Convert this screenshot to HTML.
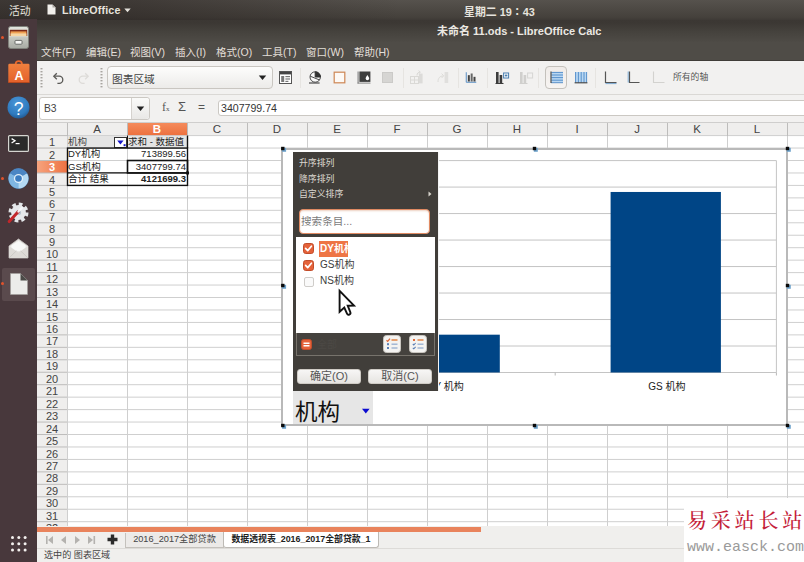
<!DOCTYPE html><html lang="zh-CN"><head><meta charset="utf-8"><title>LibreOffice Calc</title><style>
*{margin:0;padding:0;box-sizing:border-box}
html,body{width:804px;height:562px;overflow:hidden;background:#fff}
body{position:relative;font-family:"Liberation Sans","Noto Sans CJK SC",sans-serif;font-size:11px;color:#333}
.a{position:absolute}
.t{position:absolute;white-space:nowrap;line-height:1}
#topbar{left:0;top:0;width:804px;height:20px;background:linear-gradient(#56524d,#45413c 85%,#3e3a36)}
#dock{left:0;top:19px;width:37px;height:543px;background:#48383c}
#title{left:37px;top:19px;width:767px;height:23px;background:linear-gradient(#3b3733 0,#3c3834 18%,#45423d 55%,#4e4b46 100%)}
#menu{left:37px;top:42px;width:767px;height:19px;background:#4f4c47;border-bottom:1px solid #403d39}
#tool{left:37px;top:61px;width:767px;height:34px;background:#f2f1f0;border-bottom:1px solid #dad8d5}
#fbar{left:37px;top:95px;width:767px;height:27px;background:#f2f1f0}
.sep{position:absolute;top:68px;width:1px;height:20px;background:#e6e4e1}
.ui{font-family:"Liberation Sans","Noto Sans CJK SC",sans-serif}
.cell{position:absolute;white-space:nowrap;line-height:12.4px;height:12.4px;font-size:9.5px;color:#222}
.rn{position:absolute;left:37px;width:30px;text-align:center;font-size:11px;line-height:12.4px;height:12.4px;color:#333}
.ch{position:absolute;top:122px;width:60px;height:14px;line-height:14px;text-align:center;font-size:11.5px;color:#333}
</style></head><body>
<div class="a" id="sheet" style="left:37px;top:122px;width:767px;height:404px;background:#fff"></div>
<div class="a" style="left:37px;top:122px;width:767px;height:14px;background:#efeeed"></div>
<div class="a" style="left:37px;top:122px;width:30px;height:404px;background:#efeeed"></div>
<div class="a" style="left:127px;top:122px;width:60px;height:14px;background:linear-gradient(#f58d5e,#ec6f3d)"></div>
<div class="a" style="left:37px;top:160.51px;width:30px;height:12.46px;background:linear-gradient(90deg,#f6a37e,#ee7242)"></div>
<svg class="a" style="left:0;top:0" width="804" height="562" viewBox="0 0 804 562"><line x1="67" y1="135.60" x2="804" y2="135.60" stroke="#cfcfcf" stroke-width="1"/><line x1="37" y1="135.60" x2="67" y2="135.60" stroke="#bdbcbb" stroke-width="1"/><line x1="67" y1="148.06" x2="804" y2="148.06" stroke="#cfcfcf" stroke-width="1"/><line x1="37" y1="148.06" x2="67" y2="148.06" stroke="#bdbcbb" stroke-width="1"/><line x1="67" y1="160.51" x2="804" y2="160.51" stroke="#cfcfcf" stroke-width="1"/><line x1="37" y1="160.51" x2="67" y2="160.51" stroke="#bdbcbb" stroke-width="1"/><line x1="67" y1="172.97" x2="804" y2="172.97" stroke="#cfcfcf" stroke-width="1"/><line x1="37" y1="172.97" x2="67" y2="172.97" stroke="#bdbcbb" stroke-width="1"/><line x1="67" y1="185.42" x2="804" y2="185.42" stroke="#cfcfcf" stroke-width="1"/><line x1="37" y1="185.42" x2="67" y2="185.42" stroke="#bdbcbb" stroke-width="1"/><line x1="67" y1="197.88" x2="804" y2="197.88" stroke="#cfcfcf" stroke-width="1"/><line x1="37" y1="197.88" x2="67" y2="197.88" stroke="#bdbcbb" stroke-width="1"/><line x1="67" y1="210.33" x2="804" y2="210.33" stroke="#cfcfcf" stroke-width="1"/><line x1="37" y1="210.33" x2="67" y2="210.33" stroke="#bdbcbb" stroke-width="1"/><line x1="67" y1="222.79" x2="804" y2="222.79" stroke="#cfcfcf" stroke-width="1"/><line x1="37" y1="222.79" x2="67" y2="222.79" stroke="#bdbcbb" stroke-width="1"/><line x1="67" y1="235.24" x2="804" y2="235.24" stroke="#cfcfcf" stroke-width="1"/><line x1="37" y1="235.24" x2="67" y2="235.24" stroke="#bdbcbb" stroke-width="1"/><line x1="67" y1="247.70" x2="804" y2="247.70" stroke="#cfcfcf" stroke-width="1"/><line x1="37" y1="247.70" x2="67" y2="247.70" stroke="#bdbcbb" stroke-width="1"/><line x1="67" y1="260.15" x2="804" y2="260.15" stroke="#cfcfcf" stroke-width="1"/><line x1="37" y1="260.15" x2="67" y2="260.15" stroke="#bdbcbb" stroke-width="1"/><line x1="67" y1="272.61" x2="804" y2="272.61" stroke="#cfcfcf" stroke-width="1"/><line x1="37" y1="272.61" x2="67" y2="272.61" stroke="#bdbcbb" stroke-width="1"/><line x1="67" y1="285.06" x2="804" y2="285.06" stroke="#cfcfcf" stroke-width="1"/><line x1="37" y1="285.06" x2="67" y2="285.06" stroke="#bdbcbb" stroke-width="1"/><line x1="67" y1="297.52" x2="804" y2="297.52" stroke="#cfcfcf" stroke-width="1"/><line x1="37" y1="297.52" x2="67" y2="297.52" stroke="#bdbcbb" stroke-width="1"/><line x1="67" y1="309.97" x2="804" y2="309.97" stroke="#cfcfcf" stroke-width="1"/><line x1="37" y1="309.97" x2="67" y2="309.97" stroke="#bdbcbb" stroke-width="1"/><line x1="67" y1="322.43" x2="804" y2="322.43" stroke="#cfcfcf" stroke-width="1"/><line x1="37" y1="322.43" x2="67" y2="322.43" stroke="#bdbcbb" stroke-width="1"/><line x1="67" y1="334.88" x2="804" y2="334.88" stroke="#cfcfcf" stroke-width="1"/><line x1="37" y1="334.88" x2="67" y2="334.88" stroke="#bdbcbb" stroke-width="1"/><line x1="67" y1="347.33" x2="804" y2="347.33" stroke="#cfcfcf" stroke-width="1"/><line x1="37" y1="347.33" x2="67" y2="347.33" stroke="#bdbcbb" stroke-width="1"/><line x1="67" y1="359.79" x2="804" y2="359.79" stroke="#cfcfcf" stroke-width="1"/><line x1="37" y1="359.79" x2="67" y2="359.79" stroke="#bdbcbb" stroke-width="1"/><line x1="67" y1="372.24" x2="804" y2="372.24" stroke="#cfcfcf" stroke-width="1"/><line x1="37" y1="372.24" x2="67" y2="372.24" stroke="#bdbcbb" stroke-width="1"/><line x1="67" y1="384.70" x2="804" y2="384.70" stroke="#cfcfcf" stroke-width="1"/><line x1="37" y1="384.70" x2="67" y2="384.70" stroke="#bdbcbb" stroke-width="1"/><line x1="67" y1="397.15" x2="804" y2="397.15" stroke="#cfcfcf" stroke-width="1"/><line x1="37" y1="397.15" x2="67" y2="397.15" stroke="#bdbcbb" stroke-width="1"/><line x1="67" y1="409.61" x2="804" y2="409.61" stroke="#cfcfcf" stroke-width="1"/><line x1="37" y1="409.61" x2="67" y2="409.61" stroke="#bdbcbb" stroke-width="1"/><line x1="67" y1="422.06" x2="804" y2="422.06" stroke="#cfcfcf" stroke-width="1"/><line x1="37" y1="422.06" x2="67" y2="422.06" stroke="#bdbcbb" stroke-width="1"/><line x1="67" y1="434.52" x2="804" y2="434.52" stroke="#cfcfcf" stroke-width="1"/><line x1="37" y1="434.52" x2="67" y2="434.52" stroke="#bdbcbb" stroke-width="1"/><line x1="67" y1="446.97" x2="804" y2="446.97" stroke="#cfcfcf" stroke-width="1"/><line x1="37" y1="446.97" x2="67" y2="446.97" stroke="#bdbcbb" stroke-width="1"/><line x1="67" y1="459.43" x2="804" y2="459.43" stroke="#cfcfcf" stroke-width="1"/><line x1="37" y1="459.43" x2="67" y2="459.43" stroke="#bdbcbb" stroke-width="1"/><line x1="67" y1="471.88" x2="804" y2="471.88" stroke="#cfcfcf" stroke-width="1"/><line x1="37" y1="471.88" x2="67" y2="471.88" stroke="#bdbcbb" stroke-width="1"/><line x1="67" y1="484.34" x2="804" y2="484.34" stroke="#cfcfcf" stroke-width="1"/><line x1="37" y1="484.34" x2="67" y2="484.34" stroke="#bdbcbb" stroke-width="1"/><line x1="67" y1="496.79" x2="804" y2="496.79" stroke="#cfcfcf" stroke-width="1"/><line x1="37" y1="496.79" x2="67" y2="496.79" stroke="#bdbcbb" stroke-width="1"/><line x1="67" y1="509.25" x2="804" y2="509.25" stroke="#cfcfcf" stroke-width="1"/><line x1="37" y1="509.25" x2="67" y2="509.25" stroke="#bdbcbb" stroke-width="1"/><line x1="67" y1="521.70" x2="804" y2="521.70" stroke="#cfcfcf" stroke-width="1"/><line x1="37" y1="521.70" x2="67" y2="521.70" stroke="#bdbcbb" stroke-width="1"/><line x1="67.5" y1="136" x2="67.5" y2="526" stroke="#cfcfcf" stroke-width="1"/><line x1="67.5" y1="122" x2="67.5" y2="136" stroke="#bdbcbb" stroke-width="1"/><line x1="127.5" y1="136" x2="127.5" y2="526" stroke="#cfcfcf" stroke-width="1"/><line x1="127.5" y1="122" x2="127.5" y2="136" stroke="#bdbcbb" stroke-width="1"/><line x1="187.5" y1="136" x2="187.5" y2="526" stroke="#cfcfcf" stroke-width="1"/><line x1="187.5" y1="122" x2="187.5" y2="136" stroke="#bdbcbb" stroke-width="1"/><line x1="247.5" y1="136" x2="247.5" y2="526" stroke="#cfcfcf" stroke-width="1"/><line x1="247.5" y1="122" x2="247.5" y2="136" stroke="#bdbcbb" stroke-width="1"/><line x1="307.5" y1="136" x2="307.5" y2="526" stroke="#cfcfcf" stroke-width="1"/><line x1="307.5" y1="122" x2="307.5" y2="136" stroke="#bdbcbb" stroke-width="1"/><line x1="367.5" y1="136" x2="367.5" y2="526" stroke="#cfcfcf" stroke-width="1"/><line x1="367.5" y1="122" x2="367.5" y2="136" stroke="#bdbcbb" stroke-width="1"/><line x1="427.5" y1="136" x2="427.5" y2="526" stroke="#cfcfcf" stroke-width="1"/><line x1="427.5" y1="122" x2="427.5" y2="136" stroke="#bdbcbb" stroke-width="1"/><line x1="487.5" y1="136" x2="487.5" y2="526" stroke="#cfcfcf" stroke-width="1"/><line x1="487.5" y1="122" x2="487.5" y2="136" stroke="#bdbcbb" stroke-width="1"/><line x1="547.5" y1="136" x2="547.5" y2="526" stroke="#cfcfcf" stroke-width="1"/><line x1="547.5" y1="122" x2="547.5" y2="136" stroke="#bdbcbb" stroke-width="1"/><line x1="607.5" y1="136" x2="607.5" y2="526" stroke="#cfcfcf" stroke-width="1"/><line x1="607.5" y1="122" x2="607.5" y2="136" stroke="#bdbcbb" stroke-width="1"/><line x1="667.5" y1="136" x2="667.5" y2="526" stroke="#cfcfcf" stroke-width="1"/><line x1="667.5" y1="122" x2="667.5" y2="136" stroke="#bdbcbb" stroke-width="1"/><line x1="727.5" y1="136" x2="727.5" y2="526" stroke="#cfcfcf" stroke-width="1"/><line x1="727.5" y1="122" x2="727.5" y2="136" stroke="#bdbcbb" stroke-width="1"/><line x1="787.5" y1="136" x2="787.5" y2="526" stroke="#cfcfcf" stroke-width="1"/><line x1="787.5" y1="122" x2="787.5" y2="136" stroke="#bdbcbb" stroke-width="1"/><line x1="37" y1="122.5" x2="804" y2="122.5" stroke="#cfcecd" stroke-width="1"/></svg>
<div class="ch" style="left:67px;color:#444;font-weight:normal">A</div>
<div class="ch" style="left:127px;color:#fff;font-weight:bold">B</div>
<div class="ch" style="left:187px;color:#444;font-weight:normal">C</div>
<div class="ch" style="left:247px;color:#444;font-weight:normal">D</div>
<div class="ch" style="left:307px;color:#444;font-weight:normal">E</div>
<div class="ch" style="left:367px;color:#444;font-weight:normal">F</div>
<div class="ch" style="left:427px;color:#444;font-weight:normal">G</div>
<div class="ch" style="left:487px;color:#444;font-weight:normal">H</div>
<div class="ch" style="left:547px;color:#444;font-weight:normal">I</div>
<div class="ch" style="left:607px;color:#444;font-weight:normal">J</div>
<div class="ch" style="left:667px;color:#444;font-weight:normal">K</div>
<div class="ch" style="left:727px;color:#444;font-weight:normal">L</div>
<div class="ch" style="left:787px;color:#444;font-weight:normal">M</div>
<div class="rn" style="top:136.20px;color:#444;font-weight:normal">1</div>
<div class="rn" style="top:148.66px;color:#444;font-weight:normal">2</div>
<div class="rn" style="top:161.11px;color:#fff;font-weight:bold">3</div>
<div class="rn" style="top:173.56px;color:#444;font-weight:normal">4</div>
<div class="rn" style="top:186.02px;color:#444;font-weight:normal">5</div>
<div class="rn" style="top:198.47px;color:#444;font-weight:normal">6</div>
<div class="rn" style="top:210.93px;color:#444;font-weight:normal">7</div>
<div class="rn" style="top:223.38px;color:#444;font-weight:normal">8</div>
<div class="rn" style="top:235.84px;color:#444;font-weight:normal">9</div>
<div class="rn" style="top:248.29px;color:#444;font-weight:normal">10</div>
<div class="rn" style="top:260.75px;color:#444;font-weight:normal">11</div>
<div class="rn" style="top:273.21px;color:#444;font-weight:normal">12</div>
<div class="rn" style="top:285.66px;color:#444;font-weight:normal">13</div>
<div class="rn" style="top:298.12px;color:#444;font-weight:normal">14</div>
<div class="rn" style="top:310.57px;color:#444;font-weight:normal">15</div>
<div class="rn" style="top:323.02px;color:#444;font-weight:normal">16</div>
<div class="rn" style="top:335.48px;color:#444;font-weight:normal">17</div>
<div class="rn" style="top:347.94px;color:#444;font-weight:normal">18</div>
<div class="rn" style="top:360.39px;color:#444;font-weight:normal">19</div>
<div class="rn" style="top:372.85px;color:#444;font-weight:normal">20</div>
<div class="rn" style="top:385.30px;color:#444;font-weight:normal">21</div>
<div class="rn" style="top:397.75px;color:#444;font-weight:normal">22</div>
<div class="rn" style="top:410.21px;color:#444;font-weight:normal">23</div>
<div class="rn" style="top:422.66px;color:#444;font-weight:normal">24</div>
<div class="rn" style="top:435.12px;color:#444;font-weight:normal">25</div>
<div class="rn" style="top:447.58px;color:#444;font-weight:normal">26</div>
<div class="rn" style="top:460.03px;color:#444;font-weight:normal">27</div>
<div class="rn" style="top:472.49px;color:#444;font-weight:normal">28</div>
<div class="rn" style="top:484.94px;color:#444;font-weight:normal">29</div>
<div class="rn" style="top:497.39px;color:#444;font-weight:normal">30</div>
<div class="rn" style="top:509.85px;color:#444;font-weight:normal">31</div>
<div class="rn" style="top:522.00px;height:4.79px;overflow:hidden">32</div>
<div class="a" style="left:68px;top:136.10px;width:59px;height:11.96px;background:#e4e4e4"></div>
<div class="a" style="left:128px;top:136.10px;width:59px;height:11.96px;background:#e4e4e4"></div>
<div class="cell" style="left:68px;top:136.00px;width:58px;text-align:left;color:#444;">机构</div>
<div class="cell" style="left:128px;top:136.00px;width:58px;text-align:left;color:#222;">求和 - 数据值</div>
<div class="cell" style="left:68px;top:148.46px;width:58px;text-align:left;">DY机构</div>
<div class="cell" style="left:128px;top:148.46px;width:58px;text-align:right;">713899.56</div>
<div class="cell" style="left:68px;top:160.91px;width:58px;text-align:left;">GS机构</div>
<div class="cell" style="left:128px;top:160.91px;width:58px;text-align:right;">3407799.74</div>
<div class="cell" style="left:68px;top:173.37px;width:58px;text-align:left;">合计 结果</div>
<div class="cell" style="left:128px;top:173.37px;width:58px;text-align:right;font-weight:bold;">4121699.3</div>
<div class="a" style="left:114px;top:136.60px;width:13px;height:10.96px;background:#fff;border:1px solid #333"></div>
<svg class="a" style="left:114.5px;top:136.60px" width="12" height="11" viewBox="0 0 12 11"><path d="M2.2 3.6h6.4L5.4 7.4z" fill="#1414c8"/><rect x="8.6" y="7.2" width="2" height="2" fill="#1414c8"/></svg>
<svg class="a" style="left:0;top:0" width="804" height="562" viewBox="0 0 804 562" fill="none" stroke="#111"><rect x="67.5" y="148.06" width="120" height="37.36" stroke-width="1.4"/><line x1="67" y1="172.97" x2="188" y2="172.97" stroke-width="1.3"/><line x1="127.5" y1="135.60" x2="127.5" y2="148.06" stroke-width="1"/><line x1="187.5" y1="135.60" x2="187.5" y2="148.06" stroke-width="1.4"/><rect x="127.5" y="160.51" width="60" height="12.46" stroke-width="1.6"/><rect x="186" y="171.47" width="3" height="3" fill="#111" stroke="none"/></svg>
<div class="a" style="left:281px;top:148px;width:507px;height:278px;background:#fff;border:2px solid #b9b9b9"></div>
<svg class="a" style="left:0;top:0" width="804" height="562" viewBox="0 0 804 562"><line x1="331.0" y1="160.60" x2="776.4" y2="160.60" stroke="#c4c4c4" stroke-width="1"/><line x1="331.0" y1="187.09" x2="776.4" y2="187.09" stroke="#c4c4c4" stroke-width="1"/><line x1="331.0" y1="213.57" x2="776.4" y2="213.57" stroke="#c4c4c4" stroke-width="1"/><line x1="331.0" y1="240.06" x2="776.4" y2="240.06" stroke="#c4c4c4" stroke-width="1"/><line x1="331.0" y1="266.55" x2="776.4" y2="266.55" stroke="#c4c4c4" stroke-width="1"/><line x1="331.0" y1="293.04" x2="776.4" y2="293.04" stroke="#c4c4c4" stroke-width="1"/><line x1="331.0" y1="319.52" x2="776.4" y2="319.52" stroke="#c4c4c4" stroke-width="1"/><line x1="331.0" y1="346.01" x2="776.4" y2="346.01" stroke="#c4c4c4" stroke-width="1"/><line x1="331.0" y1="372.50" x2="776.4" y2="372.50" stroke="#c4c4c4" stroke-width="1"/><line x1="776.4" y1="160.60" x2="776.4" y2="372.50" stroke="#c4c4c4" stroke-width="1"/><line x1="334.0" y1="160.60" x2="334.0" y2="375.50" stroke="#c4c4c4" stroke-width="1"/><line x1="334.0" y1="372.50" x2="334.0" y2="375.50" stroke="#b8b8b8" stroke-width="1"/><line x1="555.2" y1="372.50" x2="555.2" y2="375.50" stroke="#b8b8b8" stroke-width="1"/><line x1="776.4" y1="372.50" x2="776.4" y2="375.50" stroke="#b8b8b8" stroke-width="1"/><rect x="389.5" y="334.68" width="110.3" height="37.82" fill="#004586"/><rect x="610.6" y="191.97" width="110.3" height="180.53" fill="#004586"/><text x="445.6" y="390" font-size="10" fill="#222" text-anchor="middle" font-family="Liberation Sans, Noto Sans CJK SC, sans-serif">DY 机构</text><text x="666.8" y="390" font-size="10" fill="#222" text-anchor="middle" font-family="Liberation Sans, Noto Sans CJK SC, sans-serif">GS 机构</text><rect x="282.1" y="147.8" width="4" height="4" fill="#6fa3cc"/><rect x="281.1" y="146.8" width="3.4" height="3.4" fill="#0a0a0a"/><rect x="533.8" y="147.8" width="4" height="4" fill="#6fa3cc"/><rect x="532.8" y="146.8" width="3.4" height="3.4" fill="#0a0a0a"/><rect x="786.8" y="147.8" width="4" height="4" fill="#6fa3cc"/><rect x="785.8" y="146.8" width="3.4" height="3.4" fill="#0a0a0a"/><rect x="282.1" y="284.8" width="4" height="4" fill="#6fa3cc"/><rect x="281.1" y="283.8" width="3.4" height="3.4" fill="#0a0a0a"/><rect x="786.8" y="284.8" width="4" height="4" fill="#6fa3cc"/><rect x="785.8" y="283.8" width="3.4" height="3.4" fill="#0a0a0a"/><rect x="282.1" y="424.8" width="4" height="4" fill="#6fa3cc"/><rect x="281.1" y="423.8" width="3.4" height="3.4" fill="#0a0a0a"/><rect x="533.8" y="424.8" width="4" height="4" fill="#6fa3cc"/><rect x="532.8" y="423.8" width="3.4" height="3.4" fill="#0a0a0a"/><rect x="786.8" y="424.8" width="4" height="4" fill="#6fa3cc"/><rect x="785.8" y="423.8" width="3.4" height="3.4" fill="#0a0a0a"/></svg>
<div class="a" style="left:293px;top:391px;width:80px;height:33px;background:#e6e6e6"></div>
<div class="t" style="left:295px;top:401.5px;font-size:22.5px;color:#111;font-family:'Liberation Sans','Noto Sans CJK SC',sans-serif">机构</div>
<svg class="a" style="left:361px;top:408px" width="10" height="7" viewBox="0 0 10 7"><path d="M1 0.8h7.6L4.8 5.6z" fill="#0b0bd0"/></svg>
<div class="a" style="left:293px;top:152px;width:145px;height:239px;background:#413e3a"></div>
<div class="t" style="left:299px;top:159.2px;font-size:8.9px;color:#dcd8d0">升序排列</div>
<div class="t" style="left:299px;top:174.5px;font-size:8.9px;color:#dcd8d0">降序排列</div>
<div class="t" style="left:299px;top:189.8px;font-size:8.9px;color:#dcd8d0">自定义排序</div>
<svg class="a" style="left:428px;top:191px" width="4" height="6" viewBox="0 0 4 6"><path d="M0.5 0.5L3.5 3L0.5 5.5z" fill="#d8d4cc"/></svg>
<div class="a" style="left:438px;top:152px;width:1px;height:239px;background:#f4f4f4"></div>
<div class="a" style="left:299px;top:209px;width:131px;height:25px;background:#fff;border:1px solid #e08a62;border-radius:4px;box-shadow:inset 0 1px 2px rgba(200,120,80,.35)"></div>
<div class="t" style="left:301px;top:216.2px;font-size:10.6px;color:#7b7b7b">搜索条目...</div>
<div class="a" style="left:296px;top:237px;width:139px;height:96px;background:#fff"></div>
<div class="a" style="left:319px;top:241px;width:29px;height:16px;background:#ee7545;overflow:hidden"><div class="t" style="left:1px;top:3px;font-size:10px;color:#fff;font-weight:bold">DY机构</div></div>
<div class="t" style="left:320px;top:260px;font-size:10px;color:#3c3c3c">GS机构</div>
<div class="t" style="left:320px;top:276px;font-size:10px;color:#3c3c3c">NS机构</div>
<svg class="a" style="left:303px;top:243px" width="11" height="11" viewBox="0 0 11 11"><rect x="0.5" y="0.5" width="10" height="10" rx="2.2" fill="#e4623a" stroke="#c24d2b"/><path d="M2.6 5.4L4.7 7.6L8.4 3.2" stroke="#fff" stroke-width="1.7" fill="none" stroke-linecap="round" stroke-linejoin="round"/></svg>
<svg class="a" style="left:303px;top:260px" width="11" height="11" viewBox="0 0 11 11"><rect x="0.5" y="0.5" width="10" height="10" rx="2.2" fill="#e4623a" stroke="#c24d2b"/><path d="M2.6 5.4L4.7 7.6L8.4 3.2" stroke="#fff" stroke-width="1.7" fill="none" stroke-linecap="round" stroke-linejoin="round"/></svg>
<div class="a" style="left:304px;top:277px;width:10px;height:10px;border:1px solid #cfcdca;border-radius:2px;background:#fafafa"></div>
<div class="a" style="left:296px;top:333px;width:139px;height:23px;border:1px solid #77736c;border-top:none;background:#45423e"></div>
<svg class="a" style="left:301px;top:339px" width="11" height="11" viewBox="0 0 11 11"><rect x="0.5" y="0.5" width="10" height="10" rx="2.2" fill="#e4623a" stroke="#c24d2b"/><path d="M2.5 4.2h6M2.5 6.8h6" stroke="#fff" stroke-width="1.5"/></svg>
<div class="t" style="left:317px;top:340px;font-size:10px;color:#4c4945">全部</div>
<svg class="a" style="left:383px;top:335px" width="18" height="18" viewBox="0 0 18 18"><rect x="0.5" y="0.5" width="17" height="17" rx="3" fill="#f4f3f1" stroke="#c9c5bf"/><path d="M3.5 5.2l1.2 1.2L7 3.6" stroke="#e06a3a" stroke-width="1.3" fill="none"/><rect x="8.5" y="4" width="6" height="2" fill="#e6a070"/><rect x="4" y="8.2" width="2" height="2" fill="#5b7fb5"/><rect x="8.5" y="8.5" width="6" height="1.4" fill="#9db3d2"/><rect x="4" y="12" width="2" height="2" fill="#5b7fb5"/><rect x="8.5" y="12.3" width="6" height="1.4" fill="#9db3d2"/></svg>
<svg class="a" style="left:409px;top:335px" width="18" height="18" viewBox="0 0 18 18"><rect x="0.5" y="0.5" width="17" height="17" rx="3" fill="#f4f3f1" stroke="#c9c5bf"/><rect x="4" y="4" width="2" height="2" fill="#e06a3a"/><rect x="8.5" y="4" width="6" height="2" fill="#e6a070"/><path d="M3.8 9l1 1L6.6 8" stroke="#5b7fb5" stroke-width="1.1" fill="none"/><rect x="8.5" y="8.5" width="6" height="1.4" fill="#9db3d2"/><path d="M3.8 12.8l1 1L6.6 11.8" stroke="#5b7fb5" stroke-width="1.1" fill="none"/><rect x="8.5" y="12.3" width="6" height="1.4" fill="#9db3d2"/></svg>
<div class="a" style="left:297px;top:369px;width:64px;height:15px;background:linear-gradient(#f7f6f5,#e6e4e1);border-radius:3px;border:1px solid #cfcbc5;text-align:center;font-size:11px;line-height:13px;color:#555">确定(O)</div>
<div class="a" style="left:368px;top:369px;width:64px;height:15px;background:linear-gradient(#f7f6f5,#e6e4e1);border-radius:3px;border:1px solid #cfcbc5;text-align:center;font-size:11px;line-height:13px;color:#555">取消(C)</div>
<svg class="a" style="left:335px;top:286px" width="24" height="32" viewBox="0 0 24 32"><path d="M4.6 4.8V25.8L9.3 21.5L12 27.6A1.75 1.75 0 0 0 15.3 26.2L12.7 19.7L19 19.5z" fill="#fff" stroke="#111" stroke-width="1.9" stroke-linejoin="miter"/></svg>
<div class="a" style="left:37px;top:526px;width:767px;height:36px;background:#f0efed"></div>
<div class="a" style="left:37px;top:527px;width:444px;height:5px;background:#e9835c"></div>
<div class="a" style="left:37px;top:548px;width:767px;height:1px;background:#dddbd8"></div>
<svg class="a" style="left:44px;top:534px" width="60" height="12" viewBox="0 0 60 12" fill="#b4b2af"><rect x="2" y="2" width="1.6" height="8"/><path d="M9 2v8L4 6z"/><path d="M22 2v8L17 6z"/><path d="M31 2v8L36 6z"/><path d="M44 2v8L49 6z"/><rect x="49.5" y="2" width="1.6" height="8"/></svg>
<svg class="a" style="left:107px;top:534px" width="11" height="11" viewBox="0 0 11 11"><path d="M3.8 0.5h3.4v3.3h3.3v3.4H7.2v3.3H3.8V7.2H0.5V3.8h3.3z" fill="#2a2a2a"/></svg>
<div class="a" style="left:125px;top:533px;width:99px;height:15px;background:#eceae8;border:1px solid #c4c1bc;border-top:none;text-align:center;font-size:9.2px;line-height:13px;color:#444">2016_2017全部贷款</div>
<div class="a" style="left:223px;top:532px;width:156px;height:16px;background:#fff;border:1px solid #bdbab5;border-top:none;border-radius:0 0 3px 3px;text-align:center;font-size:8.9px;line-height:14px;color:#222;font-weight:bold">数据透视表_2016_2017全部贷款_1</div>
<div class="t" style="left:44px;top:551px;font-size:9.1px;color:#444">选中的 图表区域</div>
<div class="a" style="left:684px;top:498px;width:120px;height:64px;background:#fff"></div>
<div class="t" style="left:687px;top:511px;font-size:20px;letter-spacing:3.8px;color:#c41e3a;font-family:'Liberation Serif','Noto Serif CJK SC',serif;font-weight:500">易采站长站</div>
<div class="t" style="left:687px;top:540px;font-size:15px;color:#9a9a9a;font-family:'Liberation Mono',monospace">www.easck.com</div>
<div class="a" id="title"></div>
<div class="a" id="menu"></div>
<div class="a" id="tool"></div>
<div class="a" id="fbar"></div>
<div class="a" id="topbar"></div>
<div class="a" style="left:0;top:0;width:420px;height:20px;background:linear-gradient(90deg,rgba(40,34,32,.55) 0,rgba(40,34,32,.5) 130px,rgba(40,34,32,0) 400px)"></div>
<div class="a" id="dock"></div>
<div class="t" style="left:9px;top:5.8px;font-size:10.8px;color:#e6e3dd">活动</div>
<svg class="a" style="left:47px;top:4px" width="9" height="11" viewBox="0 0 9 11"><path d="M0.5 0.5h5L8.5 3.6V10.5h-8z" fill="#f2f0ec"/><path d="M5.5 0.5v3.1h3z" fill="#a9a6a0"/></svg>
<div class="t" style="left:62px;top:5.3px;font-size:10.7px;color:#e6e3dd;font-weight:bold;letter-spacing:.2px">LibreOffice</div>
<svg class="a" style="left:124px;top:8px" width="7" height="5" viewBox="0 0 7 5"><path d="M0.3 0.5h6.4L3.5 4.2z" fill="#e6e3dd"/></svg>
<div class="t" style="left:464px;top:5.8px;font-size:10.9px;color:#e6e3dd;font-weight:bold">星期二 19<span lang="ja" style="font-family:'Noto Sans CJK JP',sans-serif">：</span>43</div>
<div class="t" style="left:437px;top:25.5px;font-size:11px;color:#ebe8e2;font-weight:bold">未命名 11.ods - LibreOffice Calc</div>
<div class="t" style="left:41px;top:47px;font-size:10.5px;color:#e3dfd8">文件(F)</div>
<div class="t" style="left:86px;top:47px;font-size:10.5px;color:#e3dfd8">编辑(E)</div>
<div class="t" style="left:130px;top:47px;font-size:10.5px;color:#e3dfd8">视图(V)</div>
<div class="t" style="left:175px;top:47px;font-size:10.5px;color:#e3dfd8">插入(I)</div>
<div class="t" style="left:216px;top:47px;font-size:10.5px;color:#e3dfd8">格式(O)</div>
<div class="t" style="left:262px;top:47px;font-size:10.5px;color:#e3dfd8">工具(T)</div>
<div class="t" style="left:306px;top:47px;font-size:10.5px;color:#e3dfd8">窗口(W)</div>
<div class="t" style="left:354px;top:47px;font-size:10.5px;color:#e3dfd8">帮助(H)</div>
<svg class="a" style="left:40px;top:67px" width="3" height="22" viewBox="0 0 3 22" fill="#a8a5a0"><rect x="0.5" y="1" width="2" height="1.4"/><rect x="0.5" y="4" width="2" height="1.4"/><rect x="0.5" y="7" width="2" height="1.4"/><rect x="0.5" y="10" width="2" height="1.4"/><rect x="0.5" y="13" width="2" height="1.4"/><rect x="0.5" y="16" width="2" height="1.4"/><rect x="0.5" y="19" width="2" height="1.4"/></svg>
<svg class="a" style="left:100px;top:67px" width="3" height="22" viewBox="0 0 3 22" fill="#a8a5a0"><rect x="0.5" y="1" width="2" height="1.4"/><rect x="0.5" y="4" width="2" height="1.4"/><rect x="0.5" y="7" width="2" height="1.4"/><rect x="0.5" y="10" width="2" height="1.4"/><rect x="0.5" y="13" width="2" height="1.4"/><rect x="0.5" y="16" width="2" height="1.4"/><rect x="0.5" y="19" width="2" height="1.4"/></svg>
<svg class="a" style="left:52px;top:71px" width="14" height="15" viewBox="0 0 14 15" fill="none" stroke="#5a5956" stroke-width="1.3"><path d="M2.2 5.2H7.2A3.6 3.6 0 0 1 7.2 12.4H5.4"/><path d="M4.8 2.2L1.8 5.2L4.8 8.2"/></svg>
<svg class="a" style="left:76px;top:71px" width="14" height="15" viewBox="0 0 14 15" fill="none" stroke="#dddbd8" stroke-width="1.3"><path d="M11.8 5.2H6.8A3.6 3.6 0 0 0 6.8 12.4H8.6"/><path d="M9.2 2.2L12.2 5.2L9.2 8.2"/></svg>
<div class="a" style="left:107px;top:66px;width:166px;height:23px;background:linear-gradient(#fdfdfc,#ecebe9);border:1px solid #c9c6c1;border-radius:4px"></div>
<div class="t" style="left:112px;top:73.5px;font-size:10.7px;color:#444">图表区域</div>
<svg class="a" style="left:258px;top:75px" width="9" height="6" viewBox="0 0 9 6"><path d="M0.8 0.6h7.4L4.5 5z" fill="#222"/></svg>
<svg class="a" style="left:279px;top:71px" width="13" height="13" viewBox="0 0 13 13"><rect x="0.5" y="0.5" width="12" height="12" fill="#fff" stroke="#555"/><rect x="1" y="1" width="11" height="2.4" fill="#444"/><rect x="2.2" y="5" width="3" height="6" fill="#777"/><rect x="6.4" y="5" width="4.6" height="1.2" fill="#777"/><rect x="6.4" y="7.4" width="4.6" height="1.2" fill="#777"/><rect x="6.4" y="9.8" width="3" height="1.2" fill="#777"/></svg>
<div class="sep" style="left:300px"></div>
<div class="sep" style="left:403px"></div>
<div class="sep" style="left:458px"></div>
<div class="sep" style="left:487px"></div>
<div class="sep" style="left:538px"></div>
<div class="sep" style="left:595px"></div>
<svg class="a" style="left:308px;top:70px" width="15" height="15" viewBox="0 0 15 15" fill="none" stroke="#4a4a4a" stroke-width="1"><circle cx="7.2" cy="7" r="5.2" fill="#fafafa"/><path d="M7.2 7V1.8A5.2 5.2 0 0 1 12.4 7z" fill="#333" stroke="#333"/><path d="M2.2 6.2L11.6 10"/><path d="M1 13h10.6" stroke-width="1.2"/></svg>
<svg class="a" style="left:333px;top:71px" width="13" height="13" viewBox="0 0 13 13"><rect x="1.2" y="1.2" width="10.6" height="10.6" fill="#fdf9f5" stroke="#cf8a5a" stroke-width="1.25"/></svg>
<svg class="a" style="left:357px;top:71px" width="14" height="13" viewBox="0 0 14 13"><rect x="0.5" y="0.5" width="1.2" height="12" fill="#888"/><rect x="2.4" y="0.5" width="11" height="10.4" fill="#3e3e3e"/><path d="M10.4 4c1.2 1.8 1.7 2.6 1.7 3.5a1.7 1.7 0 0 1-3.4 0c0-.9.5-1.7 1.7-3.5z" fill="#fff"/><rect x="0.5" y="11.6" width="13" height="1" fill="#888"/></svg>
<div class="a" style="left:382px;top:72px;width:11px;height:11px;background:#d6d5d3;border:1px solid #cbcac8"></div>
<svg class="a" style="left:409px;top:70px" width="15" height="15" viewBox="0 0 15 15" fill="none" stroke="#dad9d6" stroke-width="1"><rect x="1.5" y="6.5" width="8" height="7"/><path d="M1.5 10h8M5.5 6.5v7"/><path d="M8 5.5c0-2.4 1.4-3.4 3-3.4M9.6 0.6l1.8 1.6l-1.8 1.6" /><rect x="10" y="3.6" width="3.6" height="9.8" fill="#dcdbd9" stroke="none"/></svg>
<svg class="a" style="left:435px;top:70px" width="15" height="15" viewBox="0 0 15 15" fill="none" stroke="#dddcd9" stroke-width="1"><path d="M3 12c0-4 2-6 5-6M6.6 3.6l2.2 2.2l-2.2 2.2"/><rect x="9.6" y="2" width="3.6" height="11" fill="#e0dfdd" stroke="none"/></svg>
<svg class="a" style="left:465px;top:71px" width="12.5" height="12.5" viewBox="0 0 15 15"><path d="M1.5 1.5V13.5H13.5" stroke="#5a8fc4" stroke-width="1.2" fill="none"/><rect x="3.4" y="5" width="2.4" height="7.6" fill="#444"/><rect x="6.8" y="3" width="2.4" height="9.6" fill="#666"/><rect x="10.2" y="7" width="2.4" height="5.6" fill="#444"/></svg>
<svg class="a" style="left:495px;top:70px" width="15" height="15" viewBox="0 0 15 15"><rect x="1" y="2" width="2.6" height="11" fill="#3c3c3c"/><rect x="4.6" y="5" width="2.6" height="8" fill="#3c3c3c"/><rect x="0.5" y="13" width="8" height="1" fill="#3c3c3c"/><rect x="8.6" y="3" width="5" height="5" fill="#fff" stroke="#4a7fb0"/><rect x="9.8" y="4.6" width="2.6" height="1.8" fill="#4a7fb0"/></svg>
<svg class="a" style="left:519px;top:70px" width="15" height="15" viewBox="0 0 15 15"><rect x="1" y="2" width="2.6" height="11" fill="#d0cfcd"/><rect x="4.6" y="5" width="2.6" height="8" fill="#d0cfcd"/><rect x="0.5" y="13" width="8" height="1" fill="#d0cfcd"/><rect x="8.6" y="3" width="5" height="5" fill="#f2f1f0" stroke="#d6d5d3"/></svg>
<div class="a" style="left:545px;top:66px;width:22px;height:23px;border:1px solid #c4c1bc;border-radius:4px;background:linear-gradient(#f0ece9,#f7f4f2)"></div>
<svg class="a" style="left:549.5px;top:71px" width="14" height="13" viewBox="0 0 14 13"><rect x="1.4" y="1" width="11.6" height="10.6" fill="#b9d7f2"/><path d="M1.4 1.4h11.6M1.4 4h11.6M1.4 6.6h11.6M1.4 9.2h11.6M1 11.7h12" stroke="#4d88c6" stroke-width="0.9"/><path d="M1 0.6V12" stroke="#3c3c3c" stroke-width="1.1"/></svg>
<svg class="a" style="left:573.5px;top:71px" width="14" height="13" viewBox="0 0 14 13"><rect x="1" y="1" width="11.8" height="10.4" fill="#b9d7f2"/><path d="M1.6 1v10.6M4.4 1v10.6M7.2 1v10.6M10 1v10.6M12.6 1v10.6" stroke="#4d88c6" stroke-width="0.9"/><path d="M0.6 11.8h12.8" stroke="#3c3c3c" stroke-width="1.1"/></svg>
<svg class="a" style="left:603px;top:70px" width="15" height="15" viewBox="0 0 15 15" fill="none"><path d="M2.5 1.5V12.5H13.5" stroke="#555" stroke-width="1.2"/><path d="M2.5 13.6H13.5" stroke="#7aa7d0" stroke-width="1"/></svg>
<svg class="a" style="left:626px;top:70px" width="15" height="15" viewBox="0 0 15 15" fill="none"><path d="M3.5 1.5V12.5H13.5" stroke="#555" stroke-width="1.2"/><path d="M2.2 1.5V12.5" stroke="#7aa7d0" stroke-width="1"/></svg>
<svg class="a" style="left:651px;top:70px" width="15" height="15" viewBox="0 0 15 15" fill="none"><path d="M2.5 1.5V12.5H13.5" stroke="#d3d2cf" stroke-width="1.1"/></svg>
<div class="t" style="left:673px;top:73px;font-size:8.8px;color:#555">所有的轴</div>
<div class="a" style="left:39px;top:96.5px;width:111px;height:23px;background:#fff;border:1px solid #cbc8c3;border-radius:3px"></div>
<div class="a" style="left:131px;top:97.5px;width:18px;height:21px;background:linear-gradient(#fafaf9,#e9e8e6);border-left:1px solid #d5d2ce;border-radius:0 3px 3px 0"></div>
<div class="t" style="left:44px;top:103.5px;font-size:10.3px;color:#444">B3</div>
<svg class="a" style="left:136px;top:106px" width="9" height="6" viewBox="0 0 9 6"><path d="M0.8 0.6h7.4L4.5 5z" fill="#222"/></svg>
<div class="t" style="left:162px;top:101px;font-size:12px;color:#555;font-family:'Liberation Serif',serif">f<span style="font-size:7px">x</span></div>
<div class="t" style="left:178px;top:100px;font-size:13px;color:#555">Σ</div>
<div class="t" style="left:198px;top:101px;font-size:12px;color:#555">=</div>
<div class="a" style="left:218px;top:100px;width:590px;height:16px;background:#fff;border:1px solid #cbc8c3;border-radius:3px"></div>
<div class="t" style="left:221px;top:103px;font-size:10.6px;color:#333">3407799.74</div>
<svg class="a" style="left:8px;top:26px" width="21" height="23" viewBox="0 0 21 23"><defs><linearGradient id="fg" x1="0" y1="0" x2="0" y2="1"><stop offset="0" stop-color="#e4e6e0"/><stop offset="1" stop-color="#a7aaa3"/></linearGradient></defs><rect x="0.5" y="0.5" width="20" height="22" rx="2.2" fill="url(#fg)" stroke="#80827c"/><rect x="1.8" y="3.8" width="17.4" height="6.4" fill="#7c2a18"/><rect x="2.6" y="5.4" width="15.8" height="4.8" fill="#efa052"/><rect x="2.6" y="7.4" width="15.8" height="2.8" fill="#f6d6a4"/><rect x="1" y="10.2" width="19" height="0.8" fill="#d9dbd5"/><rect x="7" y="14.4" width="7" height="3.8" rx="0.8" fill="#f6f6f4" stroke="#5f615d" stroke-width="0.9"/></svg>
<div class="a" style="left:1px;top:36px;width:3px;height:3px;border-radius:2px;background:#e0532c"></div>
<svg class="a" style="left:7.5px;top:59px" width="22" height="25" viewBox="0 0 22 25"><defs><linearGradient id="sg" x1="0" y1="0" x2="0" y2="1"><stop offset="0" stop-color="#f0803e"/><stop offset="1" stop-color="#e4602a"/></linearGradient></defs><path d="M7.6 5.4a3.2 3.2 0 0 1 6.4 0" fill="none" stroke="#e8682c" stroke-width="1.7"/><rect x="0.3" y="4.8" width="21.2" height="19.2" rx="1.2" fill="url(#sg)"/><rect x="0.3" y="23" width="21.2" height="1" fill="#b8481c"/><text x="10.9" y="21" font-size="12.5" font-weight="bold" text-anchor="middle" fill="#fff" font-family="Liberation Sans, sans-serif">A</text></svg>
<svg class="a" style="left:7px;top:95.7px" width="23" height="23" viewBox="0 0 23 23"><defs><radialGradient id="hg" cx="0.45" cy="0.3" r="0.75"><stop offset="0" stop-color="#4a97d8"/><stop offset="0.7" stop-color="#2f7abf"/><stop offset="1" stop-color="#1f5288"/></radialGradient></defs><circle cx="11.5" cy="11.5" r="11" fill="url(#hg)"/><text x="11.5" y="18.6" font-size="17.5" font-weight="normal" text-anchor="middle" fill="#fff" font-family="Liberation Sans, sans-serif">?</text></svg>
<svg class="a" style="left:8px;top:135px" width="21" height="17" viewBox="0 0 21 17"><rect x="0.6" y="0.6" width="19.8" height="15.8" rx="1" fill="#2a2a2a" stroke="#d5d5d0" stroke-width="1.2"/><path d="M3.6 3.6L7 5.8L3.6 8" fill="none" stroke="#fff" stroke-width="1.3"/><path d="M7.6 8.6h4" stroke="#fff" stroke-width="1.2"/></svg>
<svg class="a" style="left:8px;top:167.5px" width="21" height="21" viewBox="0 0 21 21"><circle cx="10.5" cy="10.5" r="10" fill="#9acbee" stroke="#3f6f9f" stroke-width="0.8"/><path d="M10.5 10.5L1.9 5.5A10 10 0 0 1 19.1 5.5z" fill="#4b86c4"/><path d="M10.5 10.5L19.1 5.5A10 10 0 0 1 10.5 20.5z" fill="#b4daf4"/><path d="M10.5 10.5L10.5 20.5A10 10 0 0 1 1.9 5.5z" fill="#7fb6e2"/><circle cx="10.5" cy="10.5" r="4.6" fill="#e4f1fa"/><circle cx="10.5" cy="10.5" r="3.3" fill="#3c7cc0"/></svg>
<div class="a" style="left:1px;top:177px;width:3px;height:3px;border-radius:2px;background:#e0532c"></div>
<svg class="a" style="left:7px;top:202px" width="22" height="22" viewBox="0 0 22 22"><circle cx="11.5" cy="10.5" r="8.2" fill="none" stroke="#e3e6e9" stroke-width="3.6" stroke-dasharray="3.6 2.84"/><circle cx="11.5" cy="10.5" r="7.4" fill="#e6e8eb"/><circle cx="11.5" cy="10.5" r="2.6" fill="#b9c4cf"/><path d="M2.2 19.6L11.4 9.6" stroke="#c3272b" stroke-width="3" stroke-linecap="round"/><path d="M11.4 9.6L15.2 5.6" stroke="#f4f6f8" stroke-width="2.2" stroke-linecap="round"/></svg>
<svg class="a" style="left:8px;top:238px" width="21" height="21" viewBox="0 0 21 21"><path d="M1 8L10.5 1L20 8V20H1z" fill="#e9e7e4" stroke="#c6c3bf" stroke-width="0.8"/><path d="M3.4 7.4L10.5 3L17.6 7.4V13H3.4z" fill="#f8f8f7"/><path d="M1 8L10.5 14.4L20 8V20H1z" fill="#dedbd7"/><path d="M1 20L8.4 12.8M20 20L12.6 12.8" stroke="#c9c6c2" stroke-width="0.8"/></svg>
<div class="a" style="left:2px;top:268px;width:33px;height:33px;background:#5a4a4d;border-radius:2px"></div>
<svg class="a" style="left:10px;top:273px" width="18" height="22" viewBox="0 0 18 22"><path d="M0.5 0.5H10.5L17.5 7.4V21.5H0.5z" fill="#ececea" stroke="#a3a19d" stroke-width="0.6"/><path d="M10.5 0.5V7.4H17.5z" fill="#4b4a47"/></svg>
<div class="a" style="left:1px;top:282px;width:3px;height:3px;border-radius:2px;background:#e0532c"></div>
<svg class="a" style="left:10px;top:535px" width="18" height="18" viewBox="0 0 18 18" fill="#f3f0ee"><circle cx="2.5" cy="2.5" r="1.5"/><circle cx="8.8" cy="2.5" r="1.5"/><circle cx="15.1" cy="2.5" r="1.5"/><circle cx="2.5" cy="8.8" r="1.5"/><circle cx="8.8" cy="8.8" r="1.5"/><circle cx="15.1" cy="8.8" r="1.5"/><circle cx="2.5" cy="15.1" r="1.5"/><circle cx="8.8" cy="15.1" r="1.5"/><circle cx="15.1" cy="15.1" r="1.5"/></svg>
</body></html>
